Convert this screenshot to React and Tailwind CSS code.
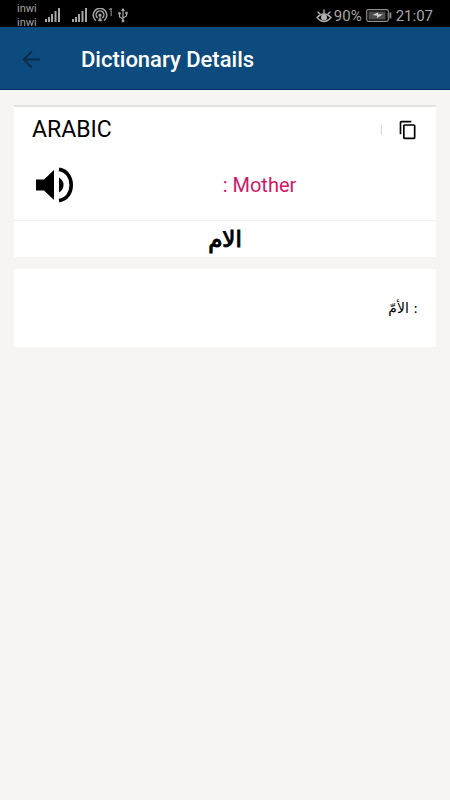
import React from "react";

function Signal() {
  return (
    <svg width="16" height="14" viewBox="0 0 16 14" fill="#a6a6a6" aria-hidden="true">
      <rect x="0" y="11" width="2" height="3" />
      <rect x="3" y="9" width="2" height="5" />
      <rect x="6" y="6" width="2" height="8" />
      <rect x="9.5" y="3" width="2" height="11" />
      <rect x="13" y="0" width="2" height="14" />
    </svg>
  );
}

function Hotspot() {
  return (
    <svg width="16" height="14" viewBox="0 0 16 14" fill="none" stroke="#a6a6a6" strokeWidth="1.5" strokeLinecap="round" aria-hidden="true">
      <path d="M3.6 12.3A6.8 6.8 0 1 1 12.4 12.3" />
      <path d="M5.2 9.6A3.9 3.9 0 1 1 10.8 9.6" />
      <circle cx="8" cy="7.2" r="0.9" fill="#a6a6a6" />
      <path d="M8 9L6.3 13H9.7Z" fill="#a6a6a6" strokeWidth="0.5" />
    </svg>
  );
}

function Usb() {
  return (
    <svg width="10" height="15" viewBox="0 0 10 15" fill="none" stroke="#a6a6a6" strokeWidth="1.2" aria-hidden="true">
      <path d="M5 2V12M5 11L1.5 9V6M5 10L8.5 8V5.5" />
      <path d="M5 0L7 3H3Z" fill="#a6a6a6" stroke="none" />
      <circle cx="5" cy="13" r="1.4" fill="#a6a6a6" stroke="none" />
      <circle cx="1.5" cy="5.4" r="1.3" fill="#a6a6a6" stroke="none" />
      <rect x="7.3" y="3.8" width="2.4" height="2.4" fill="#a6a6a6" stroke="none" />
    </svg>
  );
}

function Eye() {
  return (
    <svg width="16" height="14" viewBox="0 0 16 14" fill="none" stroke="#b0b0b0" strokeWidth="1.4" strokeLinecap="round" aria-hidden="true">
      <path d="M1 8.5Q8 1.5 15 8.5Q8 16.5 1 8.5Z" />
      <circle cx="8" cy="8.5" r="2.3" fill="#b0b0b0" />
      <path d="M8 4V1M4 5L2 3M12 5L14 3" />
    </svg>
  );
}

function Battery() {
  return (
    <svg width="26" height="13" viewBox="0 0 26 13" fill="none" aria-hidden="true">
      <rect x="0.7" y="0.7" width="21.6" height="11.6" rx="1.5" stroke="#8f8f8f" strokeWidth="1.2" />
      <rect x="2.5" y="2.5" width="17" height="8" fill="#4c4c4c" />
      <path d="M6.5 6L12.4 3.2L11.8 5.3H17L10.8 9.3L11.4 6.8Z" fill="#d4d4d4" />
      <rect x="23.5" y="3.5" width="1.8" height="6" fill="#8f8f8f" />
    </svg>
  );
}

function StatusBar() {
  return (
    <div className="flex h-[27px] items-center justify-between overflow-hidden bg-black px-[17px] text-[#a6a6a6]">
      <div className="flex items-center">
        <div className="w-7 pt-1 text-[11px] leading-[14px]">
          <div>inwi</div>
          <div>inwi</div>
        </div>
        <div className="flex items-center pt-[3px]">
          <Signal />
          <span className="w-[11px]" />
          <Signal />
          <span className="w-1" />
          <Hotspot />
          <span className="w-[10px] self-start text-[10px] leading-[9px]">1</span>
          <Usb />
        </div>
      </div>
      <div className="flex items-center pt-1 text-[15px] leading-5">
        <Eye />
        <span className="mr-1 ml-[2px]">90%</span>
        <Battery />
        <span className="ml-1">21:07</span>
      </div>
    </div>
  );
}

export default function App() {
  return (
    <div className="min-h-screen bg-[#f6f5f4] font-['Roboto','DejaVu_Sans',sans-serif] text-black">
      <StatusBar />
      <header className="flex h-[63px] items-center border-b border-[#062f66] bg-[#0d4b7e] pt-[3px] pl-[19px]">
        <button type="button" aria-label="Back" className="w-[62px]">
          <svg width="25" height="25" viewBox="0 0 24 24" fill="none" stroke="#0b2d4c" strokeWidth="2" aria-hidden="true">
            <path d="M20 12H5M12.4 4.2L4.6 12L12.4 19.8" />
          </svg>
        </button>
        <h1 className="text-[22px] leading-8 font-medium text-white">Dictionary Details</h1>
      </header>
      <main className="flex flex-col gap-3 px-[14px] pt-[15px]">
        <section className="border-t-2 border-[#e4e3e2] bg-white">
          <div className="flex h-[46px] items-center justify-between px-[18px]">
            <h2 className="text-[23px] leading-7">ARABIC</h2>
            <div className="flex items-center gap-4">
              <span className="h-[10px] w-px bg-[#d8d8d8]" />
              <button type="button" aria-label="Copy">
                <svg className="block" width="20" height="20" viewBox="0 0 24 24" aria-hidden="true">
                  <path d="M16 1H4C2.9 1 2 1.9 2 3V17H4V3H16V1ZM19 5H8C6.9 5 6 5.9 6 7V21C6 22.1 6.9 23 8 23H19C20.1 23 21 22.1 21 21V7C21 5.9 20.1 5 19 5ZM19 21H8V7H19V21Z" />
                </svg>
              </button>
            </div>
          </div>
          <div className="flex h-[68px] items-center border-b border-[#f0f0f0] pb-[3px] pl-[21px]">
            <button type="button" aria-label="Listen" className="w-[60px]">
              <svg className="block" width="40" height="38" viewBox="0 0 40 38" aria-hidden="true">
                <path d="M1 13.5H9L19 4V34L9 24.5H1Z" />
                <path d="M24 11.5Q28.5 14 28.5 19Q28.5 24 24 26.5Z" />
                <path d="M24 3.4C32 4.6 36.2 11.2 36.2 19C36.2 26.8 32 33.4 24 34.6" fill="none" stroke="black" strokeWidth="3.6" />
              </svg>
            </button>
            <p className="flex-1 pr-3 text-center text-xl leading-7 text-[#d01868]">: Mother</p>
          </div>
          <p dir="rtl" lang="ar" className="h-9 text-center font-['DejaVu_Sans',sans-serif] text-[23px] leading-9 [-webkit-text-stroke:1px_black]">الام</p>
        </section>
        <section className="bg-white px-[18px] py-[27px]">
          <p dir="rtl" lang="ar" className="text-right font-['DejaVu_Sans',sans-serif] text-sm leading-6">: الأمّ</p>
        </section>
      </main>
    </div>
  );
}
